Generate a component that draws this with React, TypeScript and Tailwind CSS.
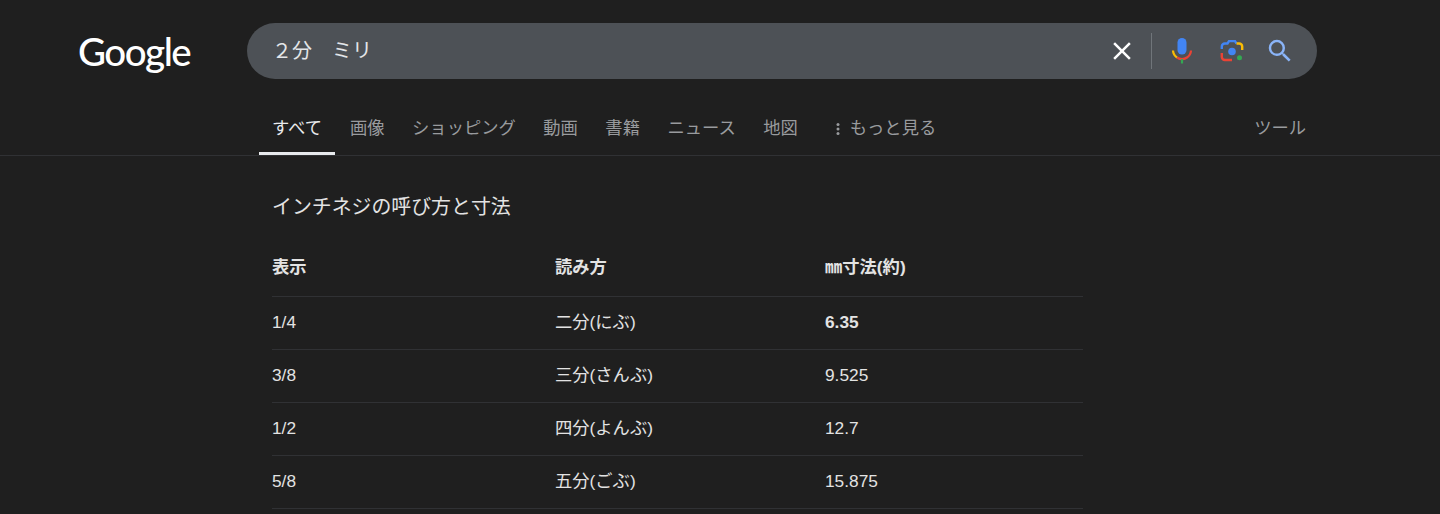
const jp = "font-['Liberation_Sans','Noto_Sans_CJK_JP',sans-serif]";

const tabs = ["画像", "ショッピング", "動画", "書籍", "ニュース", "地図"];

const rows = [
  { size: "1/4", name: "二分(にぶ)", mm: "6.35", bold: true },
  { size: "3/8", name: "三分(さんぶ)", mm: "9.525" },
  { size: "1/2", name: "四分(よんぶ)", mm: "12.7" },
  { size: "5/8", name: "五分(ごぶ)", mm: "15.875" },
];

function VoiceIcon() {
  return (
    <svg width="24" height="28" viewBox="0 0 24 28" fill="none">
      <rect x="7.5" y="1" width="9" height="16.5" rx="4.5" fill="#4285f4" />
      <path d="M3 13.5a9 9 0 0 0 4 7" stroke="#fbbc04" strokeWidth="2.2" />
      <path d="M7 20.5a9 9 0 0 0 10 0 9 9 0 0 0 4-7" stroke="#ea4335" strokeWidth="2.2" />
      <rect x="10.9" y="22" width="2.2" height="4.5" fill="#34a853" />
    </svg>
  );
}

function LensIcon() {
  return (
    <svg width="24" height="24" viewBox="0 0 24 24" fill="none">
      <path d="M1.8 10V7.5a3 3 0 0 1 3-3H7.5l1.5-2.4h6l1.5 2.4" stroke="#4285f4" strokeWidth="2.4" />
      <path d="M16.5 4.5h2.7a3 3 0 0 1 3 3V11" stroke="#fbbc04" strokeWidth="2.4" />
      <path d="M1.8 14v4a3 3 0 0 0 3 3H12" stroke="#ea4335" strokeWidth="2.4" />
      <circle cx="12" cy="12.5" r="3.8" fill="#4285f4" />
      <circle cx="19.5" cy="18.8" r="2.5" fill="#34a853" />
    </svg>
  );
}

function Row({ a, b, c, bold, head }: { a: string; b: string; c: string; bold?: boolean; head?: boolean }) {
  return (
    <div className={`grid h-[53px] grid-cols-[283px_270px_1fr] items-center border-b border-[#303134] text-[17.3px] text-[#e3e3e3] ${head ? "pb-1 font-bold" : ""}`}>
      <div>{a}</div>
      <div>{b}</div>
      <div className={bold ? "font-bold" : ""}>{c}</div>
    </div>
  );
}

export default function App() {
  return (
    <div className={`h-[514px] overflow-hidden bg-[#1f1f1f] ${jp}`}>
      <header className="flex items-center pl-[78px] pt-[23px]">
        <div className="w-[169px] font-['Lato',sans-serif] text-[38.5px] font-medium leading-[56px] tracking-[-1.5px] text-white">Google</div>
        <div className="flex h-14 w-[1070px] items-center rounded-[28px] bg-[#4d5156] pl-[25px] pr-[22px]">
          <div className="-mt-px flex-1 text-[20px] text-[#e3e5e8]">２分　ミリ</div>
          <svg width="30" height="30" viewBox="0 0 24 24" fill="#ffffff">
            <path d="M19 6.41 17.59 5 12 10.59 6.41 5 5 6.41 10.59 12 5 17.59 6.41 19 12 13.41 17.59 19 19 17.59 13.41 12z" />
          </svg>
          <div className="ml-[14px] mr-[18px] h-[36px] w-px bg-[#70757a]" />
          <VoiceIcon />
          <div className="ml-[26px]"><LensIcon /></div>
          <svg className="ml-[21px]" width="30" height="30" viewBox="0 0 24 24" fill="#8ab4f8">
            <path d="M15.5 14h-.79l-.28-.27A6.471 6.471 0 0 0 16 9.5 6.5 6.5 0 1 0 9.5 16c1.61 0 3.09-.59 4.23-1.57l.27.28v.79l5 4.99L20.49 19l-4.99-5zm-6 0C7.01 14 5 11.99 5 9.5S7.01 5 9.5 5 14 7.01 14 9.5 11.99 14 9.5 14z" />
          </svg>
        </div>
      </header>

      <nav className="mt-[23px] flex h-[54px] items-center border-b border-[#303134] pl-[259px] pr-[134px] text-[17.3px] text-[#999b9e]">
        <div className="flex h-full w-[76px] items-center justify-center border-b-[3px] border-[#e8eaed] pt-[4px] text-[#e8eaed]">すべて</div>
        <div className="ml-[15px] mt-px flex gap-[27.5px]">
          {tabs.map((t) => (
            <span key={t}>{t}</span>
          ))}
        </div>
        <div className="ml-[38px] mt-px flex items-center gap-[10px]">
          <svg width="4" height="14" viewBox="0 0 4 14" fill="currentColor">
            <circle cx="2" cy="2.5" r="1.5" />
            <circle cx="2" cy="7" r="1.5" />
            <circle cx="2" cy="11.5" r="1.5" />
          </svg>
          <span>もっと見る</span>
        </div>
        <span className="ml-auto mt-px">ツール</span>
      </nav>

      <main className="ml-[272px] w-[811px] pt-[37px]">
        <h2 className="text-[19.9px] leading-7 text-[#e3e3e3]">インチネジの呼び方と寸法</h2>
        <div className="mt-[23px]">
          <Row a="表示" b="読み方" c="㎜寸法(約)" head />
          {rows.map((r) => (
            <Row key={r.size} a={r.size} b={r.name} c={r.mm} bold={r.bold} />
          ))}
        </div>
      </main>
    </div>
  );
}
